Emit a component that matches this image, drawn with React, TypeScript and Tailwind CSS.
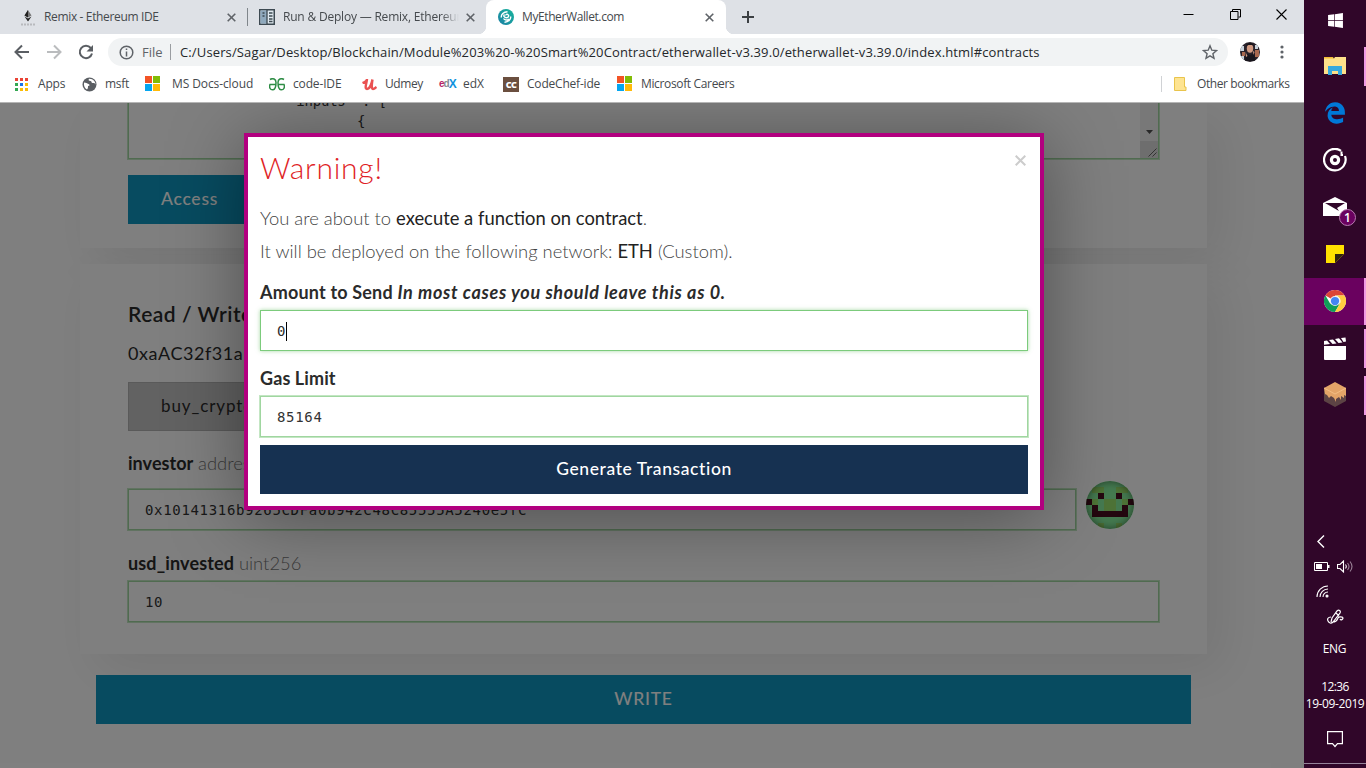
import React from 'react';
import { FaEdgeLegacy, FaWindows } from 'react-icons/fa6';

const UI = "font-['Open_Sans','Noto_Sans',sans-serif]";

function MsLogo() {
  return (
    <svg width="16" height="16" viewBox="0 0 16 16" shapeRendering="crispEdges">
      <path fill="#f35325" d="M0 0h7v7H0z" />
      <path fill="#81bc06" d="M8 0h7v7H8z" />
      <path fill="#05a6f0" d="M0 8h7v7H0z" />
      <path fill="#ffba08" d="M8 8h7v7H8z" />
    </svg>
  );
}

function CloseX({ className = '' }: { className?: string }) {
  return (
    <svg className={className} width="9" height="9" viewBox="0 0 9 9" stroke="#5f6368" strokeWidth="1.6">
      <path d="M.7.7l7.6 7.6M8.3.7L.7 8.3" />
    </svg>
  );
}

function TabStrip() {
  return (
    <div className="flex h-[34px] shrink-0 bg-[#dee1e6] text-[12px] text-[#45494d]">
      <div className="flex w-[247px] items-center pl-5">
        <svg width="16" height="20" viewBox="0 0 16 20">
          <path fill="#777" d="M8 3l3.500 5.500L8 10.500 4.500 8.500z" />
          <path fill="#222" d="M8 3v7.500L4.500 8.500zM8 14.500l3.500-5L8 11.500 4.500 9.500z" />
          <path stroke="#b8babd" strokeWidth="2" strokeDasharray="2 1" d="M1 17.500h14" />
        </svg>
        <span className="ml-2 w-[174px] whitespace-nowrap tracking-[-0.35px]">Remix - Ethereum IDE</span>
        <CloseX className="ml-[9px]" />
      </div>
      <div className="my-2 w-px bg-[#80868b]" />
      <div className="flex w-[238px] items-center pl-[11px]">
        <svg width="16" height="16" viewBox="0 0 16 16">
          <path fill="#dfe8ef" stroke="#3d4951" strokeWidth="1.500" d="M.75.75h14.500v14.500H.75z" />
          <path fill="#8fa9bd" d="M1.500 1.500H8v13H1.500z" />
          <path stroke="#3d4951" strokeWidth="1.300" d="M8 1v14M10 4h3.500M10 7h3.500M10 10h3.500M10 12.500h3.500M3.500 4h2M3.500 7h2" />
        </svg>
        <span className="ml-2 w-[176px] overflow-hidden whitespace-nowrap tracking-[-0.2px] [mask-image:linear-gradient(90deg,#000_90%,transparent)]">
          Run &amp; Deploy — Remix, Ethereum
        </span>
        <CloseX className="ml-[7px]" />
      </div>
      <div className="relative flex w-[240px] items-center rounded-t-lg bg-white pl-3">
        <div className="absolute -left-2 bottom-0 h-2 w-2 bg-[radial-gradient(circle_at_0_0,#dee1e6_8px,#fff_8.500px)]" />
        <div className="absolute -right-2 bottom-0 h-2 w-2 bg-[radial-gradient(circle_at_100%_0,#dee1e6_8px,#fff_8.500px)]" />
        <svg width="16" height="16" viewBox="0 0 16 16">
          <defs>
            <linearGradient id="mew" x1="0" y1="1" x2="1" y2="0">
              <stop offset="0" stopColor="#1a7fa5" />
              <stop offset="1" stopColor="#18b59b" />
            </linearGradient>
          </defs>
          <circle cx="8" cy="8" r="8" fill="url(#mew)" />
          <path fill="none" stroke="#fff" strokeWidth="1.400" d="M9.500 2.800C5.500 2.800 3 5.500 3.300 8.500M12.700 7.500c.2 3.200-2.300 5.800-6.200 5.700M6.500 5.500c-1.500 1.500 0 3.300 2 3.200 2 0 3-2.200 1.200-3.200-1.200-.6-2 .3-1.700 1M5.500 9.500c1 1.800 4 2.200 5.300.3" />
        </svg>
        <span className="ml-2 w-[174px] whitespace-nowrap tracking-[-0.4px]">MyEtherWallet.com</span>
        <CloseX className="ml-[9px]" />
      </div>
      <svg className="ml-4 mt-[11px]" width="12" height="12" viewBox="0 0 12 12" stroke="#3c4043" strokeWidth="2">
        <path d="M6 0v12M0 6h12" />
      </svg>
      <div className="ml-auto flex items-start gap-9 pr-[17px] pt-[9px]">
        <svg width="11" height="11" viewBox="0 0 11 11" stroke="#000"><path d="M.5 5.500h10" /></svg>
        <svg className="-mr-px" width="11" height="11" viewBox="0 0 11 11" fill="none" stroke="#000"><path d="M.5 2.500h7.500v8H.5zM2.500 2V.5h8v7.500H8.500" /></svg>
        <svg width="11" height="11" viewBox="0 0 11 11" stroke="#000" strokeWidth="1.100"><path d="M.5.5l10 10M10.500.5l-10 10" /></svg>
      </div>
    </div>
  );
}

function Toolbar() {
  return (
    <div className="flex h-9 shrink-0 items-center bg-white pl-[14px]">
      <svg width="16" height="16" viewBox="0 0 16 16" fill="none" stroke="#5a5e63" strokeWidth="2"><path d="M15 8H2M8 1.500L1.500 8 8 14.500" /></svg>
      <svg className="ml-4" width="16" height="16" viewBox="0 0 16 16" fill="none" stroke="#babcbe" strokeWidth="2"><path d="M1 8h13M8 1.500L14.500 8 8 14.500" /></svg>
      <svg className="ml-4" width="16" height="16" viewBox="0 0 16 16"><path fill="none" stroke="#5a5e63" strokeWidth="2" d="M12.800 4A6.200 6.200 0 1 0 14 9.500" /><path fill="#5a5e63" d="M15 1v6.500H8.500z" /></svg>
      <div className="ml-[14px] flex h-7 w-[1120px] items-center rounded-full bg-[#f1f3f4] pl-[11px] pr-[10px]">
        <svg width="15" height="15" viewBox="0 0 15 15" fill="none" stroke="#5f6368" strokeWidth="1.500"><circle cx="7.500" cy="7.500" r="6.300" /><path d="M7.500 6.500v5M7.500 3.500V5" /></svg>
        <span className="ml-[8px] w-[28px] pt-px text-[13px] text-[#5f6368]">File</span>
        <div className="h-4 w-px bg-[#9a9da1]" />
        <span className="ml-[9px] whitespace-nowrap pt-px text-[13px] tracking-[0.135px] text-[#24272a]">
          C:/Users/Sagar/Desktop/Blockchain/Module%203%20-%20Smart%20Contract/etherwallet-v3.39.0/etherwallet-v3.39.0/index.html#contracts
        </span>
        <svg className="ml-auto" width="16" height="16" viewBox="0 0 16 16" fill="none" stroke="#5f6368" strokeWidth="1.400"><path d="M8 1.800l1.800 4.400 4.700.4-3.600 3.100 1.100 4.600L8 11.800l-4 2.500 1.100-4.600L1.500 6.600l4.700-.4z" /></svg>
      </div>
      <svg className="ml-3" width="20" height="20" viewBox="0 0 20 20">
        <clipPath id="face"><circle cx="10" cy="10" r="10" /></clipPath>
        <g clipPath="url(#face)">
          <path fill="#29222a" d="M0 0h20v20H0z" />
          <path fill="#c9d3dc" d="M0 4h4v5H0zM15 3h3v4h-3zM1 14h3v4H1z" />
          <path fill="#a8684f" d="M15 8h4v7h-4zM2 10h3v4H2z" />
          <ellipse cx="10" cy="6.500" rx="3.200" ry="4.200" fill="#d19a82" />
          <path fill="#18151c" d="M6 4c1-4 7-4 8 0l-1.500-1h-4zM6 11l4 2 4-2 2 8H5z" />
          <path fill="#cf9a84" d="M5.500 10l2 4-1.500 1zM13 9l1.500 1-1 3z" />
        </g>
      </svg>
      <svg className="ml-5" width="4" height="14" viewBox="0 0 4 14" fill="#5f6368"><circle cx="2" cy="2" r="1.600" /><circle cx="2" cy="7" r="1.600" /><circle cx="2" cy="12" r="1.600" /></svg>
    </div>
  );
}

const appDots = ['#ea4335', '#ea4335', '#ea4335', '#34a853', '#1a73e8', '#fbbc05', '#34a853', '#fbbc05', '#fbbc05'];

function Bookmarks() {
  return (
    <div className="flex h-[32px] shrink-0 items-center bg-white pb-1 pl-[15px] text-[12px] text-[#45494d]">
      <div className="grid w-[13px] grid-cols-3 gap-[2px]">
        {appDots.map((c, i) => (
          <div key={i} className="h-[3px] w-[3px]" style={{ background: c }} />
        ))}
      </div>
      <span className="ml-[10px] w-[44px] tracking-[-0.2px]">Apps</span>
      <svg width="15" height="15" viewBox="0 0 15 15"><circle cx="7.500" cy="7.500" r="7" fill="#5a5e63" /><path fill="#fff" d="M2 5.500c2 0 3 1 4.500 1.500s1.500 2-.5 2c0 1.500 0 2.500-1 3.500-2-1-3.500-3.500-3-7zM7 1.800c-1 1.500 0 2.200 1.500 2.200S9 6.500 11 6s2.500 1 2.500 2c.2-3-2-6.300-6.500-6.200z" /></svg>
      <span className="ml-2 w-[40px] tracking-[-0.3px]">msft</span>
      <MsLogo />
      <span className="ml-[11px] w-[97px] whitespace-nowrap tracking-[-0.1px]">MS Docs-cloud</span>
      <svg width="16" height="13" viewBox="0 0 16 13" fill="none" stroke="#2f8d46" strokeWidth="1.500"><path d="M1 1.500C4-.3 7 1 7 4.500S7 11.500 4 11.800 0 9 1 6.500h6M15 1.500C12-.3 9 1 9 4.500s0 7 3 7.300 4-2.800 3-5.300H9" /></svg>
      <span className="ml-2 w-[69px] whitespace-nowrap tracking-[-0.15px]">code-IDE</span>
      <svg width="15" height="13" viewBox="0 0 15 13" fill="none" stroke="#ea5252" strokeWidth="2.400"><path d="M.5 5C3 4 5 2 5 1 5 4 2 11 5 11s5-7 5.500-9.500C10 5 9 11 11 11s2-1 3.500-2" /></svg>
      <span className="ml-2 w-[54px] tracking-[-0.4px]">Udmey</span>
      <span className="flex w-[16px] items-center font-['Liberation_Sans',sans-serif] text-[10px] font-bold leading-none tracking-[-1px] text-[#b72667]">
        e<span className="text-[#858b91]">d</span><span className="text-[12px] text-[#1192dd]">X</span>
      </span>
      <span className="ml-2 w-[40px]">edX</span>
      <span className="flex h-[15px] w-[16px] items-center justify-center bg-[#6b4f3f] text-[9px] font-extrabold leading-none tracking-[-0.5px] text-white">CC</span>
      <span className="ml-2 w-[90px] whitespace-nowrap tracking-[-0.2px]">CodeChef-ide</span>
      <MsLogo />
      <span className="ml-2 whitespace-nowrap tracking-[-0.35px]">Microsoft Careers</span>
      <div className="ml-auto h-4 w-px bg-[#d0d2d5]" />
      <svg className="ml-3" width="13" height="14" viewBox="0 0 13 14"><path fill="#fee491" stroke="#e9c44c" d="M.5.5h10v9.500h1.500v3.500H.5z" /></svg>
      <span className="ml-[10px] w-[107px] whitespace-nowrap tracking-[-0.4px]">Other bookmarks</span>
    </div>
  );
}

const identicon = ['........', '.oo..oo.', '..x..x..', 'xo.oo.ox', '.x.oo.x.', '.xxxxxx.', '........', '..o..o..'];

function Identicon() {
  return (
    <div className="relative ml-[10px] h-12 w-12 overflow-hidden rounded-full bg-[#8af4a0]">
      <svg width="48" height="48" viewBox="0 0 8 8" shapeRendering="crispEdges">
        {identicon.flatMap((row, y) =>
          row.split('').map((c, x) =>
            c === '.' ? null : <rect key={`${x}-${y}`} x={x} y={y} width="1" height="1" fill={c === 'x' ? '#4a1020' : '#9ce66e'} />
          )
        )}
      </svg>
      <div className="absolute inset-0 rounded-full shadow-[inset_0_0_8px_rgba(0,0,0,0.5)]" />
    </div>
  );
}

const field =
  "flex h-[41px] items-center border border-[#a0d6a0] bg-white pl-4 pt-[2px] font-['DejaVu_Sans_Mono','Liberation_Mono',monospace] text-[14px] tracking-[0.67px] text-[#333] shadow-[0_0_0_1px_#c3e6c3]";

function Page() {
  return (
    <div className="flex h-[665px] flex-col overflow-hidden bg-white px-20 text-[#2b2b2b]">
      <div className="h-[145px] w-[1127px] shrink-0 bg-white px-12 shadow-[16px_16px_47px_rgba(0,0,0,0.08)]">
        <div className="flex h-[56px] w-[1031px] justify-between border border-t-0 border-[#a0d6a0] shadow-[0_0_0_1px_#c3e6c3]">
          <div className="-mt-[12px] ml-[159px] whitespace-pre font-['DejaVu_Sans_Mono','Liberation_Mono',monospace] text-[14px] leading-[20px] text-[#333]">
            <div className="tracking-[-0.2px]">{'"inputs" : ['}</div>
            <div className="pl-[69px]">{'{'}</div>
          </div>
          <div className="flex w-[18px] flex-col bg-[#f1f1f1]">
            <div className="flex h-[38px] items-end justify-center pb-[7px]">
              <svg width="7" height="4" viewBox="0 0 7 4"><path fill="#505050" d="M0 0h7L3.500 4z" /></svg>
            </div>
            <div className="flex h-[17px] items-end justify-end bg-[#dcdcdc] p-px">
              <svg width="9" height="9" viewBox="0 0 9 9" stroke="#666"><path d="M.5 8.500l8-8M4.500 8.500l4-4" /></svg>
            </div>
          </div>
        </div>
        <div className="mt-4 flex h-[49px] w-[200px] items-center bg-[#0e97c0] pl-[33px] text-[17.5px] font-medium tracking-[0.75px] text-white">Access</div>
      </div>
      <div className="mt-4 h-[390px] w-[1127px] shrink-0 bg-white px-12 pt-[35px] shadow-[16px_16px_47px_rgba(0,0,0,0.08)]">
        <div className="h-[30px] whitespace-nowrap text-[21px] font-semibold leading-[30px] tracking-[0.5px]">Read / Write</div>
        <div className="mt-[11px] h-[26px] text-[18px] leading-[26px] tracking-[0.55px]">0xaAC32f31a</div>
        <div className="mt-[16px] flex h-[49px] w-[220px] items-center border border-[#b5b5b5] bg-[#c4c4c4] pb-px pl-8 text-[17px] tracking-[0.9px]">buy_crypto</div>
        <div className="mt-[19px] h-[26px] text-[18.4px] leading-[26px]">
          <span className="text-[18px] font-bold tracking-[0.05px]">investor</span> <span className="font-light text-[#777]">address</span>
        </div>
        <div className="mt-[5px] flex h-12 items-center">
          <div className={`${field} mt-[9px] w-[948px]`}>0x10141316b9265CDFa0b942C48C85555A5240e5fC</div>
          <Identicon />
        </div>
        <div className="mt-[21px] h-[26px] text-[18.4px] leading-[26px]">
          <span className="text-[18px] font-bold tracking-[0.15px]">usd_invested</span> <span className="font-light text-[#777]">uint256</span>
        </div>
        <div className={`${field} mt-[5px] w-[1031px]`}>10</div>
      </div>
      <div className="ml-4 mt-[21px] flex h-[49px] w-[1095px] shrink-0 items-center justify-center bg-[#0e97c0] text-[17.5px] font-medium tracking-[0.75px] text-white">WRITE</div>
    </div>
  );
}

function Modal() {
  return (
    <div className="absolute inset-0 flex items-start justify-center bg-black/50 pr-[16px] pt-[30px]">
      <div className="h-[377px] w-[800px] border-4 border-[#b2007f] bg-white px-3 pt-[11px] text-[#2b2b2b] shadow-[0_8px_70px_rgba(0,0,0,0.38)]">
        <div className="flex h-[38px] justify-between">
          <h2 className="text-[30px] font-light leading-[38px] tracking-[0.75px] text-[#e01e26]">Warning!</h2>
          <svg className="mr-[2px] mt-[7px]" width="11" height="11" viewBox="0 0 11 11" stroke="#ccc" strokeWidth="2"><path d="M.7.7l9.600 9.600M10.300.7L.7 10.300" /></svg>
        </div>
        <p className="mt-[16px] h-[33px] text-[18.4px] font-light leading-[33px] text-[#444]">
          You are about to <span className="font-normal text-[#222]">execute a function on contract</span>.
        </p>
        <p className="h-[33px] text-[18.4px] font-light leading-[33px] text-[#444]">
          It will be deployed on the following network: <span className="font-normal text-[#222]">ETH</span> (Custom).
        </p>
        <p className="mt-[11px] h-[26px] whitespace-nowrap text-[18px] font-bold leading-[26px] tracking-[0.18px]">
          Amount to Send <i className="tracking-[0.66px]">In most cases you should leave this as 0.</i>
        </p>
        <div className="mt-[5px] flex h-[41px] items-center border border-[#7ccb7c] pl-4 pt-[2px] font-['DejaVu_Sans_Mono','Liberation_Mono',monospace] text-[14px] tracking-[0.67px] shadow-[0_0_4px_rgba(93,186,90,0.55)]">
          0<span className="h-[19px] w-px bg-black" />
        </div>
        <p className="mt-[14px] h-[26px] text-[18px] font-bold leading-[26px] tracking-[0.1px]">Gas Limit</p>
        <div className={`${field} mt-[5px]`}>85164</div>
        <div className="mt-[8px] flex h-[49px] items-center justify-center bg-[#163151] text-[17.5px] font-medium tracking-[0.6px] text-white">Generate Transaction</div>
      </div>
    </div>
  );
}

function Slot({ active = false, open = false, children }: { active?: boolean; open?: boolean; children: React.ReactNode }) {
  return (
    <div className={`relative flex h-[47px] w-full shrink-0 items-center justify-center pb-[2px] pr-px ${active ? 'bg-[#6a015f]' : ''}`}>
      {children}
      {open && <div className={`absolute right-0 w-[2px] bg-[#f09be4] ${active ? 'inset-y-0' : 'inset-y-1'}`} />}
    </div>
  );
}

function Taskbar() {
  return (
    <div className="flex h-[768px] w-[62px] flex-col items-center bg-[#300629] text-[12px] text-white">
      <div className="flex h-[43px] shrink-0 items-center pb-[3px]"><FaWindows size={17} /></div>
      <Slot open>
        <svg width="22" height="19" viewBox="0 0 22 19"><path fill="#f2bd35" d="M0 1h9l1 2H0z" /><path fill="#fde08a" d="M0 2.500h10L11 1h11v17H0z" /><path fill="#35a9de" d="M4 10h14v9h-4v-4H8v4H4z" /></svg>
      </Slot>
      <Slot><FaEdgeLegacy size={22} color="#0078d7" /></Slot>
      <Slot>
        <svg width="24" height="24" viewBox="0 0 24 24" fill="none" stroke="#fff" strokeWidth="2.200"><path d="M18 2.800A10.800 10.800 0 1 0 22 8" /><circle cx="12" cy="12" r="3.600" strokeWidth="3.200" /><path d="M18.500 3.500v4M17.500 7h2.500" strokeWidth="2" /></svg>
      </Slot>
      <Slot>
        <svg width="24" height="20" viewBox="0 0 24 20"><path fill="#fff" d="M0 6l12-6 12 6v13H0z" /><path fill="#300629" d="M2 6h20l-8 5 2 3z" /></svg>
        <div className="absolute left-[35px] top-[25px] flex h-[17px] w-[17px] items-center justify-center rounded-full border border-[#b77bb0] bg-[#6a015f] font-['Open_Sans',sans-serif] text-[12px] font-semibold leading-none">1</div>
      </Slot>
      <Slot><svg width="18" height="18" viewBox="0 0 18 18"><path fill="#ffe100" d="M0 0h18v9L9 18H0z" /><path fill="#30240f" d="M9 18V9h9z" /></svg></Slot>
      <Slot active open>
        <svg width="22" height="22" viewBox="0 0 48 48">
          <circle cx="24" cy="24" r="24" fill="#fff" />
          <path fill="#db4437" d="M24 24L3.200 12A24 24 0 0 1 44.800 12H24z" />
          <path fill="#0f9d58" d="M3.200 12A24 24 0 0 0 24 48l10.400-18L24 24l-10.400 6z" />
          <path fill="#ffcd40" d="M44.800 12A24 24 0 0 1 24 48l10.400-18A12 12 0 0 0 24 12z" />
          <circle cx="24" cy="24" r="11" fill="#f1f1f1" />
          <circle cx="24" cy="24" r="9" fill="#4285f4" />
        </svg>
      </Slot>
      <Slot open>
        <svg width="22" height="24" viewBox="0 0 22 24" fill="#fff"><path d="M0 10h22v13a1 1 0 0 1-1 1H1a1 1 0 0 1-1-1zM0 5l3-.5 3 3.500-6 .7zM5 4l4-.6 3.500 4-4 .5zM11 3l4-.7 3.500 4.200-4 .5zM17 2l4.500-.6.500 4-2.500.5z" /></svg>
      </Slot>
      <Slot open>
        <svg width="22" height="25" viewBox="0 0 22 25"><path fill="#5c4344" d="M0 6l11 6 11-6v13l-11 6-11-6z" /><path fill="#e3a468" d="M0 6l11-6 11 6v8l-2-1v3l-3-2v4l-2-3-3 2v3l-2-4-3-2-2 2-2-3-2-1z" /><path fill="none" stroke="#f2bd83" d="M0 6l11 6 11-6" /></svg>
      </Slot>
      <div className={`flex w-full flex-1 flex-col items-center pt-[116px] ${UI}`}>
        <svg className="-ml-7 shrink-0" width="8" height="13" viewBox="0 0 8 13" fill="none" stroke="#fff" strokeWidth="1.400"><path d="M7 .5l-6 6 6 6" /></svg>
        <div className="mt-[12px] flex gap-[7px] pr-[3px]">
          <svg width="16" height="14" viewBox="0 0 16 14"><path fill="none" stroke="#fff" d="M.5 2.500h13v8H.5z" /><path fill="#fff" d="M14 5h1.500v3H14zM2 4h6v5H2z" /></svg>
          <svg width="17" height="14" viewBox="0 0 17 14" fill="none" stroke="#fff" strokeWidth="1.100"><path d="M.5 4.500h2.500L6.500 1v11L3 8.500H.5zM8.500 4.500q1.500 2 0 4" /><path stroke="#9b8297" d="M10.500 3q3 3.500 0 7M13 1.500q4 5 0 10" /></svg>
        </div>
        <svg className="-ml-[25px] mt-[11px] shrink-0" width="13" height="13" viewBox="0 0 13 13" fill="none" stroke="#fff" strokeWidth="1.100"><path d="M1 12A11 11 0 0 1 12 1M4 12A8 8 0 0 1 12 4M7 12a5 5 0 0 1 5-5" /><circle cx="11" cy="11" r="1" fill="#fff" /></svg>
        <svg className="mt-[11px] shrink-0" width="17" height="17" viewBox="0 0 17 17" fill="none" stroke="#fff" strokeWidth="1.200"><path d="M4 8C1 8 0 10 1 12s3 3 5 1l7-9c1-2-1-4-3-2L5 9l-1 4M6 13c4 0 4-2 5-4s5-1 5 0-2 3-3 1M9 4l3 3" /></svg>
        <span className="mt-[15px] h-4 pr-px leading-4 tracking-[-0.3px]">ENG</span>
        <span className="mt-[22px] h-4 leading-4 tracking-[-0.6px]">12:36</span>
        <span className="mt-px h-4 whitespace-nowrap leading-4 tracking-[-0.4px]">19-09-2019</span>
        <svg className="mt-[19px] shrink-0" width="16" height="17" viewBox="0 0 16 17" fill="none" stroke="#fff" strokeWidth="1.200"><path d="M.6.600h14.800v12H10.500L8 15.500l-2.500-2.900H.6z" /></svg>
        <div className="mt-auto mb-1 h-px w-full bg-[#96839a]" />
      </div>
    </div>
  );
}

export default function App() {
  return (
    <div className="flex h-[768px] w-[1366px] overflow-hidden">
      <div className="flex w-[1304px] flex-col">
        <div className={UI}>
          <TabStrip />
          <Toolbar />
          <Bookmarks />
          <div className="h-px bg-[#b5b5b5]" />
        </div>
        <div className="relative overflow-hidden font-['Lato',sans-serif]">
          <Page />
          <Modal />
        </div>
      </div>
      <Taskbar />
    </div>
  );
}
